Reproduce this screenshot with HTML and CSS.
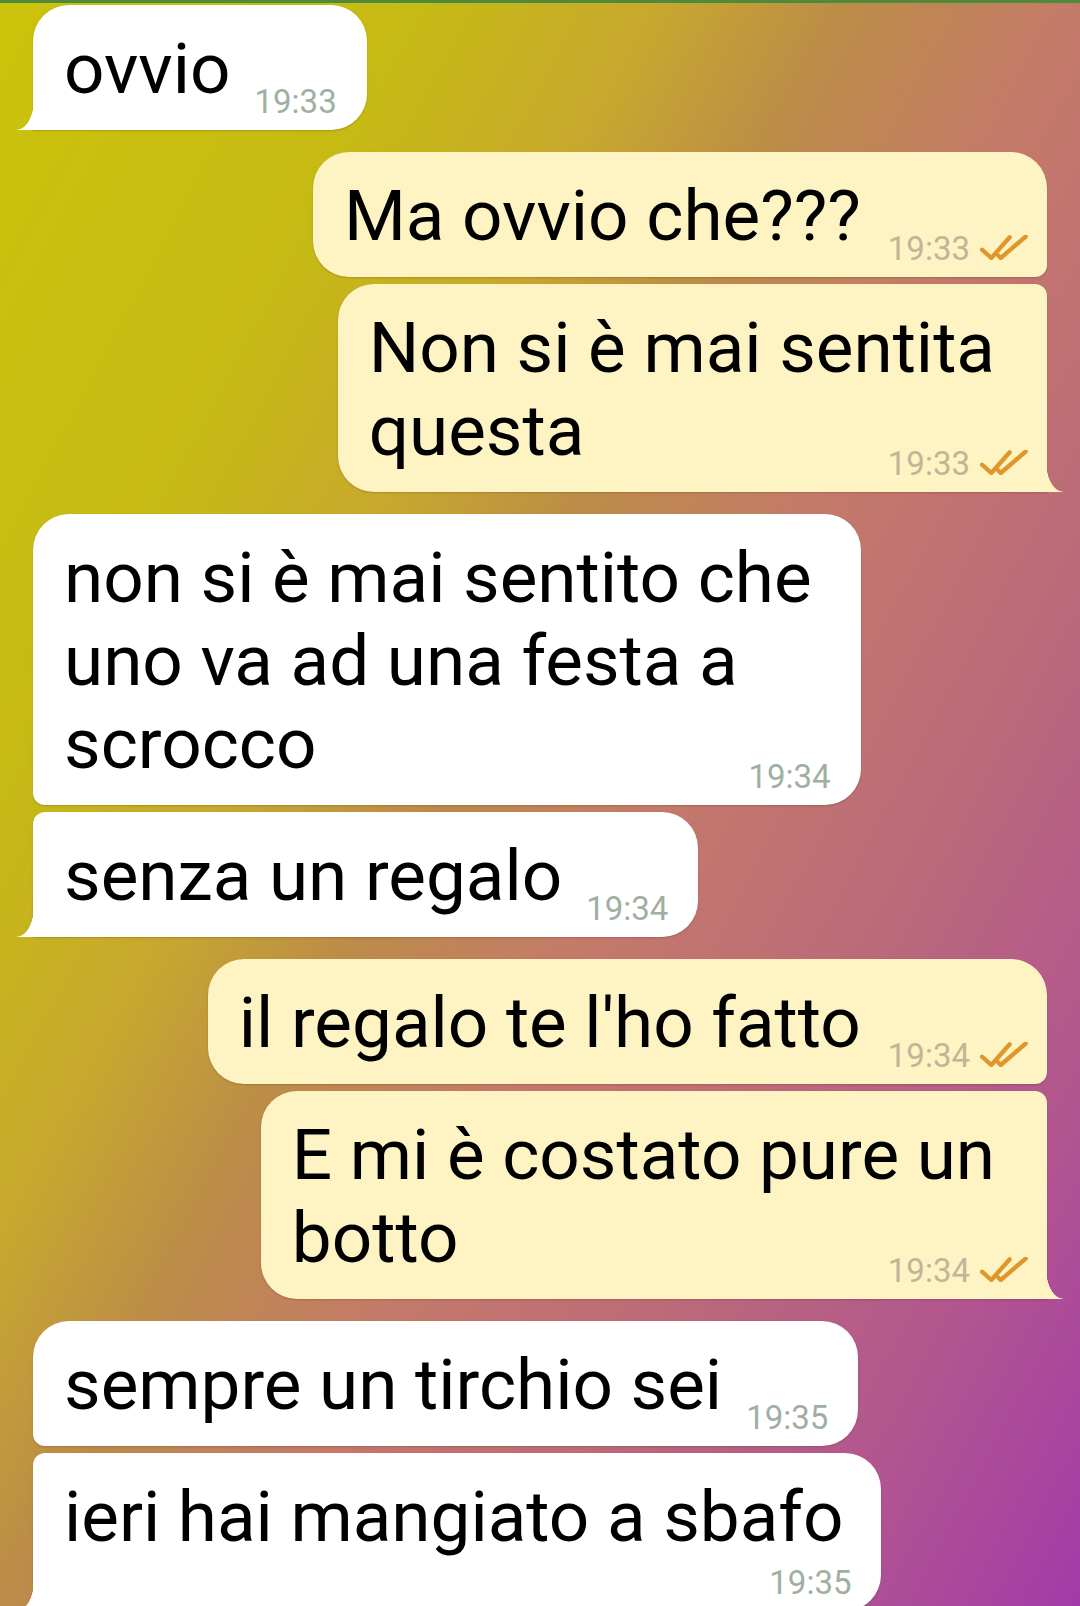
FILE: index.html
```html
<!DOCTYPE html>
<html lang="it">
<head>
<meta charset="utf-8">
<title>Chat</title>
<link rel="stylesheet" href="styles.css">
</head>
<body>
<div class="screen">
  <div class="appbar-edge"></div>
  <main class="chat">
    <section class="group group--in">
      <div class="msg"><p class="text">ovvio<span class="meta"><time>19:33</time></span></p></div>
    </section>

    <section class="group group--out">
      <div class="msg"><p class="text">Ma ovvio che???<span class="meta"><time>19:33</time><svg class="ticks" viewBox="0 0 48 25" width="48" height="25"><path d="M2 14.7 L11.3 23 L29.7 2.3"/><path d="M18.3 20.6 L20.7 23 L45.7 1.5"/></svg></span></p></div>
      <div class="msg msg--multi"><p class="text">Non si è mai sentita<br>questa<span class="meta"><time>19:33</time><svg class="ticks" viewBox="0 0 48 25" width="48" height="25"><path d="M2 14.7 L11.3 23 L29.7 2.3"/><path d="M18.3 20.6 L20.7 23 L45.7 1.5"/></svg></span></p></div>
    </section>

    <section class="group group--in">
      <div class="msg msg--multi"><p class="text">non si è mai sentito che<br>uno va ad una festa a<br>scrocco<span class="meta"><time>19:34</time></span></p></div>
      <div class="msg"><p class="text">senza un regalo<span class="meta"><time>19:34</time></span></p></div>
    </section>

    <section class="group group--out">
      <div class="msg"><p class="text">il regalo te l'ho fatto<span class="meta"><time>19:34</time><svg class="ticks" viewBox="0 0 48 25" width="48" height="25"><path d="M2 14.7 L11.3 23 L29.7 2.3"/><path d="M18.3 20.6 L20.7 23 L45.7 1.5"/></svg></span></p></div>
      <div class="msg msg--multi"><p class="text">E mi è costato pure un<br>botto<span class="meta"><time>19:34</time><svg class="ticks" viewBox="0 0 48 25" width="48" height="25"><path d="M2 14.7 L11.3 23 L29.7 2.3"/><path d="M18.3 20.6 L20.7 23 L45.7 1.5"/></svg></span></p></div>
    </section>

    <section class="group group--in">
      <div class="msg"><p class="text">sempre un tirchio sei<span class="meta"><time>19:35</time></span></p></div>
      <div class="msg msg--meta-below"><p class="text">ieri hai mangiato a sbafo<span class="meta"><time>19:35</time></span></p></div>
    </section>
  </main>
</div>
</body>
</html>
```

FILE: styles.css
```css
* {
  box-sizing: border-box;
}

html,
body {
  margin: 0;
  padding: 0;
}

body {
  font-family: Roboto, "Noto Sans", "Liberation Sans", sans-serif;
  background: #b06a70;
}

.screen {
  width: 1080px;
  height: 1606px;
  overflow: hidden;
  background: linear-gradient(118deg,
    #cbc30b 0%,
    #c6ba14 22%,
    #c8a82e 34%,
    #bc8c48 44%,
    #c47a6a 56%,
    #bc6b78 70%,
    #b25590 86%,
    #a33aa8 100%);
}

.appbar-edge {
  height: 3px;
  background: #4f8a3a;
}

.chat {
  display: flex;
  flex-direction: column;
  gap: 22px;
  padding: 2px 33px 0;
}

.group {
  display: flex;
  flex-direction: column;
  gap: 7px;
}

.group--in {
  align-items: flex-start;
  --bubble: #ffffff;
  --time: #9eb09f;
}

.group--out {
  align-items: flex-end;
  --bubble: #fef3c3;
  --time: #c2b597;
}

.msg {
  position: relative;
  background: var(--bubble);
  border-radius: 36px;
  box-shadow: 0 1px 2px rgba(60, 40, 0, 0.22);
  padding: 22px 30px 12px 31px;
}

.group--out .msg {
  padding-right: 19px;
}

.text {
  margin: 0;
  font-size: 71px;
  line-height: 83px;
  color: #000;
}

.meta {
  float: right;
  margin: 58px 0 0 24px;
  font-size: 33px;
  line-height: 33px;
  color: var(--time);
  white-space: nowrap;
}

.group--out .meta {
  margin-left: 27px;
}

.ticks {
  margin-left: 10px;
  fill: none;
  stroke: #e0962a;
  stroke-width: 4.3;
  stroke-linecap: round;
  stroke-linejoin: round;
}

/* multi-line bubbles keep the room of the trailing space */
.group--in .msg--multi .text {
  padding-right: 19px;
}

.group--in .msg--multi .meta {
  margin-right: -19px;
}

.group--out .msg--multi .text {
  padding-right: 33px;
}

.group--out .msg--multi .meta {
  margin-right: -33px;
}

/* time on its own row when the text fills the bubble */
.msg--meta-below .text {
  padding-right: 8px;
}

.msg--meta-below .meta {
  float: none;
  display: block;
  text-align: right;
  margin: 8px -8px 0 0;
}

/* grouped corners */
.group--in .msg:not(:last-child) {
  border-bottom-left-radius: 12px;
}

.group--in .msg:not(:first-child) {
  border-top-left-radius: 12px;
}

.group--out .msg:not(:last-child) {
  border-bottom-right-radius: 12px;
}

.group--out .msg:not(:first-child) {
  border-top-right-radius: 12px;
}

/* tails */
.group--in .msg:last-child {
  border-bottom-left-radius: 0;
}

.group--out .msg:last-child {
  border-bottom-right-radius: 0;
}

.group .msg:last-child::after {
  content: "";
  position: absolute;
  bottom: 0;
  width: 17px;
  height: 30px;
}

.group--in .msg:last-child::after {
  left: -16px;
  background: radial-gradient(17px 30px at 0 0, transparent 97%, var(--bubble) 100%);
}

.group--out .msg:last-child::after {
  right: -16px;
  background: radial-gradient(17px 30px at 100% 0, transparent 97%, var(--bubble) 100%);
}
```
